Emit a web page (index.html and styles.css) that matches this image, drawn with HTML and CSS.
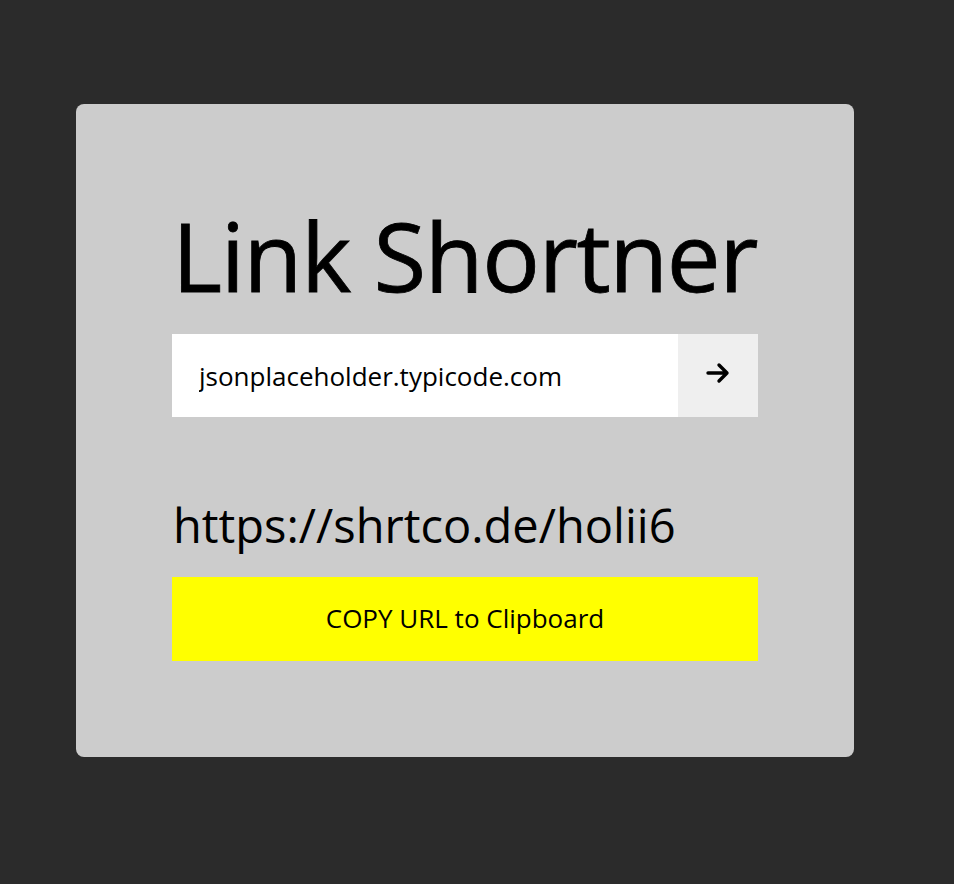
FILE: index.html
```html
<!DOCTYPE html>
<html lang="en">
<head>
<meta charset="utf-8">
<title>Link Shortner</title>
<link rel="stylesheet" href="styles.css">
</head>
<body>
<main class="card">
  <h1 class="title">Link Shortner</h1>
  <form class="shorten">
    <input class="url-input" type="text" value="jsonplaceholder.typicode.com">
    <button class="go" type="button" aria-label="Shorten">
      <svg width="24" height="22" viewBox="0 0 24 22"><path d="M2 11h19M13 3l8 8-8 8" fill="none" stroke="#000" stroke-width="3.4" stroke-linecap="round" stroke-linejoin="round"/></svg>
    </button>
  </form>
  <p class="result">https://shrtco.de/holii6</p>
  <button class="copy" type="button">COPY URL to Clipboard</button>
</main>
</body>
</html>
```

FILE: styles.css
```css
html, body {
  margin: 0;
  padding: 0;
}
body {
  background: #2b2b2b;
  min-height: 884px;
  font-family: "Open Sans", sans-serif;
  color: #000;
  padding: 104px 0 0 76px;
  box-sizing: border-box;
}
.card {
  width: 778px;
  height: 653px;
  box-sizing: border-box;
  background: #cccccc;
  border-radius: 8px;
  padding: 96px 96px 0 96px;
  display: flex;
  flex-direction: column;
}
.title {
  margin: 0 0 0 0;
  font-size: 96px;
  font-weight: 400;
  line-height: 110px;
  letter-spacing: -1.4px;
  white-space: nowrap;
  -webkit-text-stroke: 0.8px #000;
}
.shorten {
  margin-top: 24px;
  display: flex;
  height: 83px;
}
.url-input {
  flex: 1;
  border: none;
  outline: none;
  background: #fff;
  padding: 0 0 0 27px;
  margin: 0;
  font-family: "Open Sans", sans-serif;
  font-size: 26px;
  color: #000;
}
.go {
  width: 80px;
  border: none;
  margin: 0;
  background: #efefef;
  display: flex;
  align-items: center;
  justify-content: center;
  padding: 0 0 6px 0;
}
.result {
  margin: 82px 0 0 1px;
  font-size: 47px;
  line-height: 52px;
  white-space: nowrap;
}
.copy {
  margin-top: 26px;
  height: 84px;
  border: none;
  background: #ffff00;
  font-family: "Open Sans", sans-serif;
  font-size: 26px;
  color: #000;
  padding: 0 0 2px 0;
}
```
